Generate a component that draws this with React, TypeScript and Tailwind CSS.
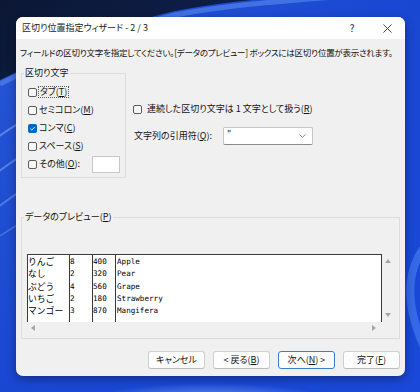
import React from "react";

function Box({ checked }: { checked?: boolean }) {
  if (checked) {
    return (
      <span className="w-[9px] h-[9px] rounded-[2px] bg-[#0067c0] flex items-center justify-center shrink-0">
        <svg width="7" height="7" viewBox="0 0 7 7">
          <path d="M1.3 3.7 L2.8 5.1 L5.8 1.9" stroke="#ffffff" strokeWidth="0.9" fill="none" />
        </svg>
      </span>
    );
  }
  return <span className="w-[9px] h-[9px] rounded-[2px] border border-[#5c5c5c] bg-[#f8f8f8] shrink-0" />;
}

function Wallpaper() {
  return (
    <svg className="absolute inset-0" width="420" height="392" viewBox="0 0 420 392">
      <defs>
        <linearGradient id="navy" x1="0" y1="0" x2="1" y2="1">
          <stop offset="0" stopColor="#0b1734" />
          <stop offset="1" stopColor="#12307a" />
        </linearGradient>
        <linearGradient id="bloom" x1="0" y1="0" x2="1" y2="1">
          <stop offset="0" stopColor="#2756d2" />
          <stop offset="0.5" stopColor="#1a47d2" />
          <stop offset="1" stopColor="#1a48d8" />
        </linearGradient>
        <radialGradient id="btm" cx="0.5" cy="0.5" r="0.5">
          <stop offset="0" stopColor="#8ab2f4" stopOpacity="0.9" />
          <stop offset="1" stopColor="#8ab2f4" stopOpacity="0" />
        </radialGradient>
      </defs>
      <rect width="420" height="392" fill="url(#navy)" />
      <path d="M0 80 C 50 56 110 26 175 11 C 240 -1 300 -4 345 -8 L 430 -8 L 430 400 L 0 400 Z" fill="url(#bloom)" />
      <path d="M0 84 C 50 60 110 30 175 15 C 240 3 300 0 345 -4" stroke="#5f8ff0" strokeWidth="5" fill="none" opacity="0.55" />
      <path d="M-6 140 C 20 120 60 100 110 80" stroke="#86acf5" strokeWidth="2" fill="none" opacity="0.55" />
      <path d="M-6 175 C 20 155 60 130 110 110" stroke="#86acf5" strokeWidth="2" fill="none" opacity="0.5" />
      <path d="M-6 210 C 20 190 60 165 110 145" stroke="#86acf5" strokeWidth="2" fill="none" opacity="0.45" />
      <path d="M-6 240 C 20 222 60 200 110 180" stroke="#86acf5" strokeWidth="1.5" fill="none" opacity="0.4" />
      <ellipse cx="210" cy="405" rx="130" ry="22" fill="url(#btm)" />
      <path d="M440 230 C 405 260 400 300 430 360" stroke="#4a80f2" strokeWidth="8" fill="none" opacity="0.6" />
    </svg>
  );
}

export default function App() {
  return (
    <div className="relative w-[420px] h-[392px] overflow-hidden font-['Noto_Sans_CJK_JP','Noto_Sans',sans-serif] [font-feature-settings:'palt'] text-[9px] leading-[12px] text-[#111]">
      <Wallpaper />
      <div className="absolute left-[16px] top-[17px] w-[389px] h-[359px] rounded-[7px] bg-[#f0f0f0] shadow-[0_3px_10px_rgba(0,0,0,0.35)] flex flex-col overflow-hidden">
        {/* title bar */}
        <div className="h-[22px] bg-white flex items-center shrink-0">
          <span className="ml-[6px] text-[#1b1b1b]">区切り位置指定ウィザード - 2 / 3</span>
          <div className="ml-auto flex items-center">
            <span className="w-[28px] text-center text-[#1b1b1b] text-[10px]">?</span>
            <span className="w-[30px] ml-[6px] flex justify-center">
              <svg width="9" height="9" viewBox="0 0 9 9">
                <path d="M0.5 0.5 L8.5 8.5 M8.5 0.5 L0.5 8.5" stroke="#333333" strokeWidth="0.9" />
              </svg>
            </span>
            <span className="w-[3px]" />
          </div>
        </div>

        {/* body */}
        <div className="flex-1 flex flex-col px-[5px]">
          <div className="mt-[7px] -ml-[1px] whitespace-nowrap text-[8.5px] tracking-[-0.25px]">
            フィールドの区切り文字を指定してください。[データのプレビュー] ボックスには区切り位置が表示されます。
          </div>

          <div className="mt-[9px] flex">
            <fieldset className="w-[105px] border border-[#dcdcdc] p-0 m-0">
              <legend className="ml-[2px] px-[1px] leading-[12px]">区切り文字</legend>
              <div className="pt-[4px] pb-[4px] pl-[6px] pr-[5px] flex flex-col">
                <div className="h-[18px] flex items-center">
                  <Box />
                  <span className="ml-[1px] border border-dotted border-[#555] px-[1px] leading-[10px]">
                    タブ(<u>T</u>)
                  </span>
                </div>
                <div className="h-[18px] flex items-center gap-[2px]">
                  <Box />
                  <span>
                    セミコロン(<u>M</u>)
                  </span>
                </div>
                <div className="h-[18px] flex items-center gap-[2px]">
                  <Box checked />
                  <span>
                    コンマ(<u>C</u>)
                  </span>
                </div>
                <div className="h-[18px] flex items-center gap-[2px]">
                  <Box />
                  <span>
                    スペース(<u>S</u>)
                  </span>
                </div>
                <div className="h-[18px] flex items-center gap-[2px]">
                  <Box />
                  <span>
                    その他(<u>O</u>):
                  </span>
                  <span className="ml-auto w-[28px] h-[17px] bg-white border border-[#c8c8c8]" />
                </div>
              </div>
            </fieldset>

            <div className="ml-[7px] pt-[33px] flex flex-col">
              <div className="h-[18px] flex items-center gap-[5px]">
                <Box />
                <span className="whitespace-nowrap">
                  連続した区切り文字は 1 文字として扱う(<u>R</u>)
                </span>
              </div>
              <div className="mt-[9px] h-[18px] flex items-center">
                <span className="w-[90px] pl-[1px] whitespace-nowrap">
                  文字列の引用符(<u>Q</u>):
                </span>
                <div className="w-[90px] h-[18px] bg-white border border-[#c6c6c6] border-b-[#8a8a8a] rounded-[2px] flex items-start">
                  <span className="ml-[3px] leading-[12px]">"</span>
                  <span className="ml-auto mr-[6px] self-center">
                    <svg width="7" height="4" viewBox="0 0 7 4">
                      <path d="M0.5 0.5 L3.5 3.3 L6.5 0.5" stroke="#6e6e6e" strokeWidth="0.8" fill="none" />
                    </svg>
                  </span>
                </div>
              </div>
            </div>
          </div>

          <fieldset className="mt-[33px] w-[379px] border border-[#dcdcdc] p-0 m-0">
            <legend className="ml-[2px] px-[1px] leading-[12px]">
              データのプレビュー(<u>P</u>)
            </legend>
            <div className="pt-[31px] pb-[4px] pl-[5px] pr-[5px] flex flex-col">
              <div className="flex">
                <div className="w-[355px] h-[68px] bg-white border-l border-t border-r border-[#3a3a3a] flex overflow-hidden text-[#000]">
                  <div className="w-[42px] shrink-0 border-r border-[#3a3a3a] pt-[1px] flex flex-col font-['Noto_Sans_CJK_JP',sans-serif] [font-feature-settings:normal] text-[8.8px] leading-[12.3px] whitespace-nowrap overflow-hidden">
                    <span className="h-[12.3px]">りんご</span>
                    <span className="h-[12.3px]">なし</span>
                    <span className="h-[12.3px]">ぶどう</span>
                    <span className="h-[12.3px]">いちご</span>
                    <span className="h-[12.3px]">マンゴー</span>
                  </div>
                  <div className="w-[23px] shrink-0 border-r border-[#3a3a3a] pt-[1px] flex flex-col font-['DejaVu_Sans_Mono',monospace] text-[7.6px] leading-[12.3px]">
                    <span className="h-[12.3px]">8</span>
                    <span className="h-[12.3px]">2</span>
                    <span className="h-[12.3px]">4</span>
                    <span className="h-[12.3px]">2</span>
                    <span className="h-[12.3px]">3</span>
                  </div>
                  <div className="w-[23px] shrink-0 border-r border-[#3a3a3a] pt-[1px] flex flex-col font-['DejaVu_Sans_Mono',monospace] text-[7.6px] leading-[12.3px]">
                    <span className="h-[12.3px]">400</span>
                    <span className="h-[12.3px]">320</span>
                    <span className="h-[12.3px]">560</span>
                    <span className="h-[12.3px]">180</span>
                    <span className="h-[12.3px]">870</span>
                  </div>
                  <div className="flex-1 pl-[1px] pt-[1px] flex flex-col font-['DejaVu_Sans_Mono',monospace] text-[7.6px] leading-[12.3px]">
                    <span className="h-[12.3px]">Apple</span>
                    <span className="h-[12.3px]">Pear</span>
                    <span className="h-[12.3px]">Grape</span>
                    <span className="h-[12.3px]">Strawberry</span>
                    <span className="h-[12.3px]">Mangifera</span>
                  </div>
                </div>
                <div className="w-[12px] h-[68px] flex flex-col justify-between items-center py-[1px]">
                  <span className="h-[12px] flex items-center">
                    <svg width="6" height="4" viewBox="0 0 6 4">
                      <path d="M0 4 L3 0 L6 4 Z" fill="#a6a6a6" />
                    </svg>
                  </span>
                  <span className="h-[12px] flex items-center">
                    <svg width="6" height="4" viewBox="0 0 6 4">
                      <path d="M0 0 L3 4 L6 0 Z" fill="#a6a6a6" />
                    </svg>
                  </span>
                </div>
              </div>
              <div className="w-[355px] h-[12px] flex items-center justify-between pr-[2px]">
                <span className="w-[12px] flex justify-center">
                  <svg width="4" height="6" viewBox="0 0 4 6">
                    <path d="M4 0 L0 3 L4 6 Z" fill="#a6a6a6" />
                  </svg>
                </span>
                <span className="w-[12px] flex justify-center">
                  <svg width="4" height="6" viewBox="0 0 4 6">
                    <path d="M0 0 L4 3 L0 6 Z" fill="#a6a6a6" />
                  </svg>
                </span>
              </div>
            </div>
          </fieldset>

          <div className="mt-[12px] flex justify-end gap-[8px]">
            <button className="w-[57px] h-[18px] rounded-[3px] border border-[#d0d0d0] border-b-[#bdbdbd] bg-[#fdfdfd] flex items-center justify-center">
              キャンセル
            </button>
            <button className="w-[57px] h-[18px] rounded-[3px] border border-[#d0d0d0] border-b-[#bdbdbd] bg-[#fdfdfd] flex items-center justify-center">
              &lt; 戻る(<u>B</u>)
            </button>
            <button className="w-[57px] h-[18px] rounded-[3px] border border-[#3d7fcf] bg-[#fdfdfd] flex items-center justify-center">
              次へ(<u>N</u>) &gt;
            </button>
            <button className="w-[57px] h-[18px] rounded-[3px] border border-[#d0d0d0] border-b-[#bdbdbd] bg-[#fdfdfd] flex items-center justify-center">
              完了(<u>F</u>)
            </button>
          </div>
        </div>
      </div>
    </div>
  );
}
